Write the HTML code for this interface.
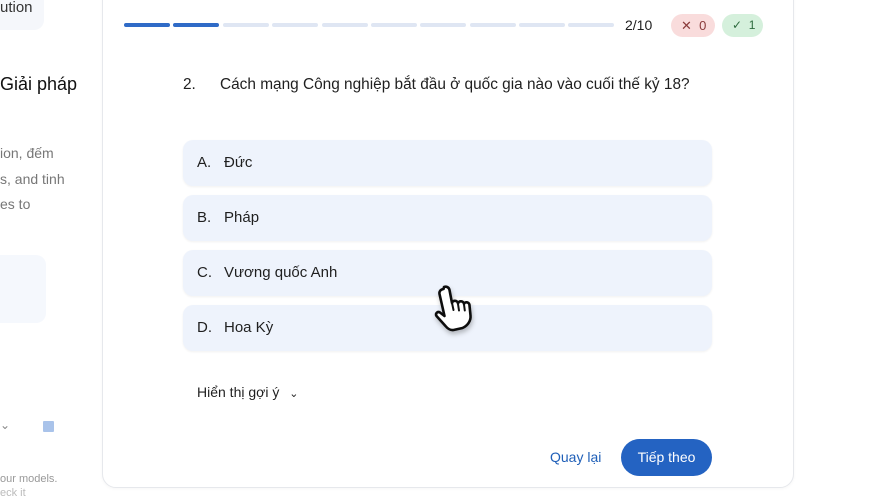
<!DOCTYPE html>
<html><head><meta charset="utf-8"><style>
*{box-sizing:border-box;margin:0;padding:0}
body{width:880px;height:495px;overflow:hidden;background:#fff;font-family:"Liberation Sans",sans-serif;color:#1f1f1f;position:relative}
.abs{position:absolute}
.lt{color:#777;font-size:14px}
.card{position:absolute;left:102px;top:-20px;width:692px;height:508px;border:1px solid #e6e8ec;border-radius:14px;background:#fff;box-shadow:0 1px 3px rgba(0,0,0,.04)}
.seg{position:absolute;top:23px;height:4px;width:46px;border-radius:2px;background:#dfe6f3}
.opt{position:absolute;left:183px;width:529px;height:46px;border-radius:10px;background:#eef3fc;box-shadow:0 1px 2px rgba(0,0,0,.06);font-size:15px;line-height:46px;padding-left:14px}
.opt span{display:inline-block;width:27px}
</style></head><body>
<div class="abs" style="left:0;top:0;width:44px;height:30px;background:#f5f7fb;border-radius:0 0 10px 0"></div>
<div class="abs" style="left:0;top:-1px;font-size:15px;color:#333">ution</div>
<div class="abs" style="left:0;top:74px;font-size:18px;color:#111">Giải pháp</div>
<div class="abs lt" style="left:0;top:145px">ion, đếm</div>
<div class="abs lt" style="left:0;top:171px">s, and tinh</div>
<div class="abs lt" style="left:0;top:196px">es to</div>
<div class="abs" style="left:0;top:255px;width:46px;height:68px;background:#f5f8fd;border-radius:0 10px 10px 0"></div>
<div class="abs" style="left:0;top:418px;font-size:12px;color:#888">⌄</div>
<div class="abs" style="left:43px;top:421px;width:11px;height:11px;background:#a9c3ea;border-radius:1px"></div>
<div class="abs" style="left:0;top:473px;font-size:11px;color:#999">our models.</div>
<div class="abs" style="left:0;top:487px;font-size:11px;color:#bbb">eck it</div>
<div class="card"></div>
<div class="seg" style="left:124px;background:#2f6bc7"></div>
<div class="seg" style="left:173px;background:#2f6bc7"></div>
<div class="seg" style="left:223px"></div><div class="seg" style="left:272px"></div><div class="seg" style="left:322px"></div><div class="seg" style="left:371px"></div><div class="seg" style="left:420px"></div><div class="seg" style="left:470px"></div><div class="seg" style="left:519px"></div><div class="seg" style="left:568px"></div>
<div class="abs" style="left:625px;top:17px;font-size:14px">2/10</div>
<div class="abs" style="left:671px;top:14px;width:44px;height:23px;border-radius:12px;background:#f9dcdc;font-size:13px;line-height:23px;color:#8a3a3a;padding-left:10px">✕&nbsp;&nbsp;0</div>
<div class="abs" style="left:722px;top:14px;width:41px;height:23px;border-radius:12px;background:#d5f0dc;font-size:12px;line-height:23px;color:#2e6b3e;padding-left:10px">✓&nbsp;&nbsp;1</div>
<div class="abs" style="left:183px;top:76px;font-size:15.4px">2.</div>
<div class="abs" style="left:220px;top:76px;font-size:15.4px">Cách mạng Công nghiệp bắt đầu ở quốc gia nào vào cuối thế kỷ 18?</div>
<div class="opt" style="top:140px"><span>A.</span>Đức</div>
<div class="opt" style="top:195px"><span>B.</span>Pháp</div>
<div class="opt" style="top:250px"><span>C.</span>Vương quốc Anh</div>
<div class="opt" style="top:305px"><span>D.</span>Hoa Kỳ</div>
<div class="abs" style="left:197px;top:384px;font-size:14px">Hiển thị gợi ý <span style="margin-left:6px;font-size:11px">⌄</span></div>
<div class="abs" style="left:550px;top:449px;font-size:14px;color:#1f5fb8">Quay lại</div>
<div class="abs" style="left:621px;top:439px;width:91px;height:37px;border-radius:19px;background:#2463c2;color:#fff;font-size:14px;line-height:37px;text-align:center">Tiếp theo</div>
<svg class="abs" style="left:428px;top:282px" width="56" height="58" viewBox="0 0 56 58">
<defs><filter id="s" x="-30%" y="-30%" width="160%" height="160%"><feDropShadow dx="1" dy="3" stdDeviation="2.5" flood-opacity="0.25"/></filter></defs>
<path filter="url(#s)" d="M16 5c2.5-1 5 0.5 5.5 3l2.5 13c0.5-3 5.5-3 6 0.5 0.5-3 5.5-3 6 0.5 0.5-2.5 5.5-2.5 5.5 1.5l1 10c0.5 5-2.5 10-8 12.5l-9 2c-3.5 0.5-6-1.5-8-4l-9-10c-1.5-2.5 1-5 3.5-3.5l4.5 3.5-5-22c-0.5-2.5 1-4.5 4-5z" fill="#fff" stroke="#111" stroke-width="2.6" stroke-linejoin="round"/>
<path d="M24 21l1.5 7M30 22l1 6.5M36 22.5l0.8 6" stroke="#111" stroke-width="2" fill="none" stroke-linecap="round"/>
</svg>
</body></html>
